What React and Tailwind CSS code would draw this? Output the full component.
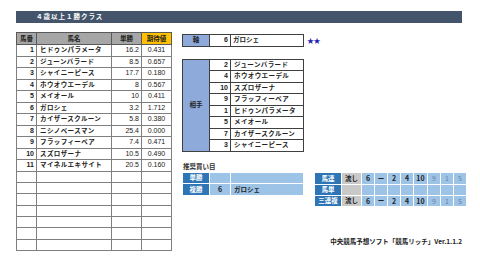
import React from 'react';

const jp = { fontFamily: '"Noto Sans CJK JP", "Noto Sans", sans-serif' };
const num = { fontFamily: '"Liberation Sans", Arial, sans-serif' };

const horses = [
  [1, 'ヒドゥンパラメータ', '16.2', '0.431'],
  [2, 'ジューンバラード', '8.5', '0.657'],
  [3, 'シャイニーピース', '17.7', '0.180'],
  [4, 'ホウオウエーデル', '8', '0.567'],
  [5, 'メイオール', '10', '0.411'],
  [6, 'ガロシェ', '3.2', '1.712'],
  [7, 'カイザースクルーン', '5.8', '0.380'],
  [8, 'ニシノベースマン', '25.4', '0.000'],
  [9, 'フラッフィーベア', '7.4', '0.471'],
  [10, 'スズロザーナ', '10.5', '0.490'],
  [11, 'マイネルエキサイト', '20.5', '0.160'],
];

const aite = [
  [2, 'ジューンバラード'],
  [4, 'ホウオウエーデル'],
  [10, 'スズロザーナ'],
  [9, 'フラッフィーベア'],
  [1, 'ヒドゥンパラメータ'],
  [5, 'メイオール'],
  [7, 'カイザースクルーン'],
  [3, 'シャイニーピース'],
];

const HorseTable = () => {
  const rows = [...horses];
  while (rows.length < 18) rows.push([null, '', '', '']);
  return (
    <table className="border-collapse table-fixed w-[155px] text-[6.5px] text-[#222]" style={jp}>
      <colgroup>
        <col className="w-[20px]" />
        <col className="w-[75px]" />
        <col className="w-[30px]" />
        <col className="w-[30px]" />
      </colgroup>
      <thead>
        <tr className="h-[12px] font-bold">
          <th className="border border-[#595959] bg-[#a6a6a6] p-0">馬番</th>
          <th className="border border-[#595959] bg-[#a6a6a6] p-0">馬名</th>
          <th className="border border-[#595959] bg-[#a6a6a6] p-0">単勝</th>
          <th className="border border-[#595959] bg-[#ffc000] p-0">期待値</th>
        </tr>
      </thead>
      <tbody>
        {rows.map((r, i) => (
          <tr key={i} className="h-[11.4px]">
            <td className="border border-[#7f7f7f] p-0 pr-[2px] text-right font-bold text-[7px]" style={num}>{r[0]}</td>
            <td className="border border-[#7f7f7f] p-0 pl-[3px] font-bold tracking-[0.4px] whitespace-nowrap">{r[1]}</td>
            <td className="border border-[#7f7f7f] p-0 pr-[2px] text-right text-[7px]" style={num}>{r[2]}</td>
            <td className="border border-[#7f7f7f] p-0 text-center text-[7px]" style={num}>{r[3]}</td>
          </tr>
        ))}
      </tbody>
    </table>
  );
};

const Cell = ({ children, className = '' }) => (
  <td className={`border border-white p-0 ${className}`}>{children}</td>
);

export default function App() {
  return (
    <div className="w-[480px] h-[262px] bg-white overflow-hidden pl-[16px] pt-[11px]" style={jp}>
      <div className="w-[446px] h-[12px] bg-[#44546a] text-white text-[6.5px] font-bold flex items-center pl-[20px] tracking-[1px]">
        ４歳以上１勝クラス
      </div>

      <div className="flex mt-[9px]">
        <HorseTable />

        <div className="ml-[10px] w-[282px] flex flex-col h-[219px]">
          <div className="flex items-center mt-[2px]">
            <table className="border-collapse table-fixed w-[121px] text-[6.5px] font-bold text-[#222]">
              <colgroup>
                <col className="w-[27px]" />
                <col className="w-[21px]" />
                <col className="w-[73px]" />
              </colgroup>
              <tbody>
                <tr className="h-[11px]">
                  <td className="border border-[#404040] bg-[#8eaadb] p-0 text-center">軸</td>
                  <td className="border border-[#404040] p-0 pr-[2px] text-right text-[7px]" style={num}>6</td>
                  <td className="border border-[#404040] p-0 pl-[2px]">ガロシェ</td>
                </tr>
              </tbody>
            </table>
            <span className="ml-[3px] text-[7px] text-[#1f1fb4] tracking-[-0.5px]">★★</span>
          </div>

          <table className="mt-[12px] border-collapse table-fixed w-[121px] text-[6.5px] font-bold text-[#222]">
            <colgroup>
              <col className="w-[27px]" />
              <col className="w-[21px]" />
              <col className="w-[73px]" />
            </colgroup>
            <tbody>
              {aite.map((a, i) => (
                <tr key={i} className="h-[11.35px]">
                  {i === 0 && (
                    <td rowSpan={8} className="border border-[#404040] bg-[#8eaadb] p-0 text-center">相手</td>
                  )}
                  <td className="border border-[#404040] p-0 pr-[2px] text-right text-[7px]" style={num}>{a[0]}</td>
                  <td className="border border-[#404040] p-0 pl-[3px] tracking-[0.4px] whitespace-nowrap">{a[1]}</td>
                </tr>
              ))}
            </tbody>
          </table>

          <div className="mt-[10px] text-[6.5px] font-bold text-[#333] pl-[1px]">推奨買い目</div>

          <div className="flex items-start mt-[1px]">
            <table className="border-collapse table-fixed w-[121px] text-[6.5px] font-bold">
              <colgroup>
                <col className="w-[27px]" />
                <col className="w-[21px]" />
                <col className="w-[73px]" />
              </colgroup>
              <tbody>
                <tr className="h-[11px]">
                  <Cell className="bg-[#2e75b6] text-white text-center">単勝</Cell>
                  <Cell className="bg-[#9dc3e6]" />
                  <Cell className="bg-[#9dc3e6]" />
                </tr>
                <tr className="h-[11px]">
                  <Cell className="bg-[#2e75b6] text-white text-center">複勝</Cell>
                  <Cell className="bg-[#9dc3e6] text-center text-[7px] text-[#222]">6</Cell>
                  <Cell className="bg-[#9dc3e6] pl-[3px] text-[#222]">ガロシェ</Cell>
                </tr>
              </tbody>
            </table>

            <table className="ml-[10px] border-collapse table-fixed w-[152px] text-[6.5px] font-bold text-[#222]">
              <colgroup>
                <col className="w-[27px]" />
                <col className="w-[20px]" />
                <col className="w-[13px]" />
                <col className="w-[13px]" />
                <col className="w-[13px]" />
                <col className="w-[13px]" />
                <col className="w-[14px]" />
                <col className="w-[13px]" />
                <col className="w-[13px]" />
                <col className="w-[13px]" />
              </colgroup>
              <tbody>
                {[
                  ['馬連', true],
                  ['馬単', false],
                  ['三連複', true],
                ].map(([label, filled]) => (
                  <tr key={label} className="h-[11px]">
                    <Cell className="bg-[#2e75b6] text-white text-center">{label}</Cell>
                    <Cell className="bg-[#c9c9c9] text-center">{filled ? '流し' : ''}</Cell>
                    <Cell className="bg-[#9dc3e6] text-center text-[7px]">{filled ? '6' : ''}</Cell>
                    <Cell className="bg-[#9dc3e6] text-center">{filled ? 'ー' : ''}</Cell>
                    <Cell className="bg-[#9dc3e6] text-center text-[7px]">{filled ? '2' : ''}</Cell>
                    <Cell className="bg-[#9dc3e6] text-center text-[7px]">{filled ? '4' : ''}</Cell>
                    <Cell className="bg-[#9dc3e6] text-center text-[7px]">{filled ? '10' : ''}</Cell>
                    <Cell className="bg-[#9dc3e6] text-center text-[7px] font-normal text-[#6a80a0]">{filled ? '9' : ''}</Cell>
                    <Cell className="bg-[#9dc3e6] text-center text-[7px] font-normal text-[#6a80a0]">{filled ? '1' : ''}</Cell>
                    <Cell className="bg-[#9dc3e6] text-center text-[7px] font-normal text-[#6a80a0]">{filled ? '5' : ''}</Cell>
                  </tr>
                ))}
              </tbody>
            </table>
          </div>

          <div className="mt-auto mb-[4px] text-right pr-[2px] text-[6.5px] font-bold text-[#222]">
            中央競馬予想ソフト「競馬リッチ」Ver.1.1.2
          </div>
        </div>
      </div>
    </div>
  );
}
